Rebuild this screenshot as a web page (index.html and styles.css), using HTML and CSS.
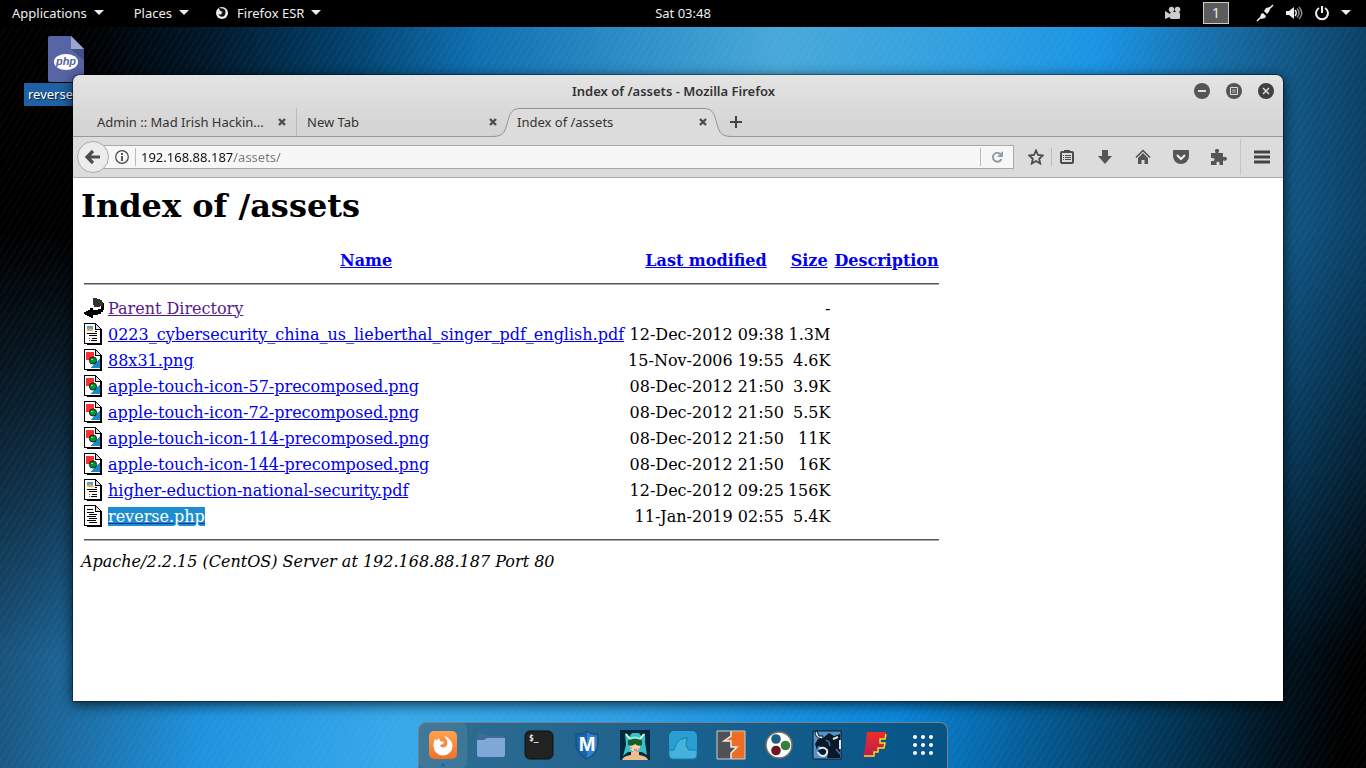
FILE: index.html
```html
<!DOCTYPE html>
<html lang="en">
<head>
<meta charset="utf-8">
<title>Index of /assets - Mozilla Firefox</title>
<link rel="stylesheet" href="styles.css">
</head>
<body>
<svg class="symbols" aria-hidden="true">
  <symbol id="page" viewBox="0 0 20 22"><path d="M1 1h11l5 5v14H1z" fill="#fff"/><path d="M0 0h12v1h1v1h1v1h1v1h1v1h1v1h1v16H3v-1H0zM1 1v19h15V7h-5V1z" fill="#000" fill-rule="evenodd"/><path d="M12 2v4h4V5h-1V4h-1V3h-1V2z" fill="#ddd"/></symbol>
  <symbol id="file-layout" viewBox="0 0 20 22"><use href="#page"/><path d="M3 3h6v5H3z" fill="#f9b04b"/><path d="M3 3h6v3H7v1H5V6H3z" fill="#4ba6d5"/><path d="M5 5h2v1h1v2H4V7h1z" fill="#f9a43f"/><path d="M11 8h2v1h-2zM3 10h10v1H3zM5 12h8v1H5zM8 15h5v1H8zM7 17h6v1H7z" fill="#000"/><path d="M5 15h1v1H5zM5 17h1v1H5z" fill="#e22"/></symbol>
  <symbol id="file-image" viewBox="0 0 20 22"><use href="#page"/><path d="M2 3h8v8H2z" fill="#fd3034"/><path d="M16 9v10H7z" fill="#168bc9"/><circle cx="9" cy="11.500" r="3.600" fill="#04933b" stroke="#000" stroke-width=".8" shape-rendering="auto"/><path d="M7 10h2v1H7z" fill="#7de28c"/></symbol>
  <symbol id="file-text" viewBox="0 0 20 22"><use href="#page"/><path d="M3 4h6v1H3zM3 7h7v1H3zM5 9h8v1H5zM3 11h9v1H3zM5 13h8v1H5zM3 15h9v1H3zM5 17h8v1H5z" fill="#000"/></symbol>
  <symbol id="file-back" viewBox="0 0 20 22"><path d="M9 1h4v1h3v1h2v2h1v4h-3v1h-6V8h-1z" fill="#333"/><path d="M19 6h1v7h-1v2h-2v2h-3v1h-5v3H7v-1H5v-1H3v-1H1v-1H0v-2h2v-1h2v-1h2v-2h3v2h5v-1h3V9h2z"/></symbol>
  <symbol id="close" viewBox="0 0 8 8"><path d="M1 1l6 6M7 1L1 7" stroke="#4d4d4d" stroke-width="2.400"/></symbol>
  <symbol id="caret" viewBox="0 0 10 6"><path d="M0 0h10L5 5z" fill="#eee"/></symbol>
</svg>

<header class="topbar">
  <nav class="menus">
    <button class="menu">Applications <svg class="caret"><use href="#caret"/></svg></button>
    <button class="menu">Places <svg class="caret"><use href="#caret"/></svg></button>
    <button class="menu fox-menu"><svg class="fox" viewBox="0 0 14 14"><circle cx="6" cy="7" r="6" fill="#eee"/><path d="M3 2c3 .5 5 0 6 2 1 2 .5 6-2 6.500C5 11 3 10 2.500 8L4 8.500 6.500 8 5 7l2-1-2-.8L3.500 4z" fill="#111"/></svg>Firefox ESR <svg class="caret"><use href="#caret"/></svg></button>
  </nav>
  <time class="clock">Sat 03:48</time>
  <div class="status">
    <button class="tray" aria-label="Recorder"><svg width="18" height="14" viewBox="0 0 18 14"><g fill="#ccc"><circle cx="7.500" cy="3.500" r="2.700"/><circle cx="13.500" cy="3.500" r="2.800"/><rect x="6" y="6" width="10" height="7" rx="1.500"/><path d="M1 5l5 3v3l-5 2z"/></g></svg></button>
    <button class="workspace">1</button>
    <button class="tray" aria-label="Network"><svg width="18" height="18" viewBox="0 0 18 18"><path d="M1 17L6 12M12 6l5-5" stroke="#eee" stroke-width="1.500"/><path d="M4 14l1-4 2-1 3 3-1 2-4 1zM8 7l2-3 4-1-.5 4L11 10z" fill="#eee"/></svg></button>
    <button class="tray" aria-label="Volume"><svg width="18" height="16" viewBox="0 0 18 16" fill="none"><path d="M1 6h3l5-4v12l-5-4H1z" fill="#eee"/><path d="M10 5q2.500 3 0 6" stroke="#eee" stroke-width="1.500"/><path d="M12 3.500q4 4.500 0 9M14 2q5.500 6 0 12" stroke="#888" stroke-width="1.500"/></svg></button>
    <button class="tray" aria-label="Power"><svg width="16" height="16" viewBox="0 0 16 16"><path d="M5 3a6 6 0 1 0 6 0M8 1v7" fill="none" stroke="#eee" stroke-width="2"/></svg></button>
    <button class="tray" aria-label="System menu"><svg class="caret"><use href="#caret"/></svg></button>
  </div>
</header>

<main class="desktop">
  <div class="shortcut">
    <svg width="36" height="46" viewBox="0 0 36 46"><path d="M2 0h21l13 13v33H2a2 2 0 0 1-2-2V2a2 2 0 0 1 2-2z" fill="#5765a4"/><path d="M23 13h13v12z" fill="#434f86"/><path d="M23 0l13 13H23z" fill="#9ca5cf"/><ellipse cx="18" cy="26" rx="12" ry="8" fill="#fff"/><text x="18" y="29" text-anchor="middle" class="php">php</text></svg>
    <span class="shortcut-name">reverse.php</span>
  </div>

  <section class="window">
    <div class="titlebar">
      <h2 class="title">Index of /assets - Mozilla Firefox</h2>
      <div class="controls">
        <button aria-label="Minimize"><svg width="16" height="16"><circle cx="8" cy="8" r="8" fill="#555"/><path d="M4 8h8" stroke="#ddd" stroke-width="2"/></svg></button>
        <button aria-label="Maximize"><svg width="16" height="16"><circle cx="8" cy="8" r="8" fill="#555"/><path d="M4.500 4.500h7v7h-7z" fill="#555" stroke="#ddd"/><path d="M6 6h4v4H6z" fill="#888" shape-rendering="crispEdges"/></svg></button>
        <button aria-label="Close"><svg width="16" height="16"><circle cx="8" cy="8" r="8" fill="#404040"/><path d="M5 5l6 6M11 5l-6 6" stroke="#ddd" stroke-width="1.500"/></svg></button>
      </div>
    </div>
    <div class="tabs">
      <div class="tab divided"><span class="tab-name">Admin :: Mad Irish Hackin...</span><button aria-label="Close tab"><svg class="x"><use href="#close"/></svg></button></div>
      <div class="tab"><span class="tab-name">New Tab</span><button aria-label="Close tab"><svg class="x"><use href="#close"/></svg></button></div>
      <div class="tab active">
        <svg class="tab-shape" viewBox="0 0 240 30" preserveAspectRatio="none"><path d="M0 28.500c13 0 13-6 16-16C18 5 20 .5 28 .5h184c8 0 10 4.500 12 12 3 10 3 16 16 16V30H0z" fill="#dcdcdc"/><path d="M0 28.500c13 0 13-6 16-16C18 5 20 .5 28 .5h184c8 0 10 4.500 12 12 3 10 3 16 16 16" fill="none" stroke="#8e959b"/></svg>
        <span class="tab-name">Index of /assets</span><button aria-label="Close tab"><svg class="x"><use href="#close"/></svg></button></div>
      <button class="new-tab" aria-label="New tab"><svg width="12" height="12"><path d="M6 0v12M0 6h12" stroke="#444" stroke-width="2"/></svg></button>
    </div>
    <div class="toolbar">
      <button class="back" aria-label="Back"><svg width="16" height="16" viewBox="0 0 16 16"><path d="M8 2L2 8l6 6M3 8h12" fill="none" stroke="#4c4c4c" stroke-width="3.200"/></svg></button>
      <div class="urlbar">
        <svg width="14" height="14" viewBox="0 0 14 14"><circle cx="7" cy="7" r="6.300" fill="none" stroke="#444" stroke-width="1.200"/><path d="M7 3v2M7 6v5" stroke="#444" stroke-width="1.800"/></svg>
        <input class="url" type="text" aria-label="Address" value="192.168.88.187/assets/">
        <button class="reload" aria-label="Reload"><svg width="14" height="14" viewBox="0 0 14 14"><path d="M11 4.500A4.500 4.500 0 1 0 11.500 9" fill="none" stroke="#929dab" stroke-width="2"/><path d="M13 1v6H7z" fill="#929dab"/></svg></button>
      </div>
      <button class="star" aria-label="Bookmark"><svg width="16" height="16" viewBox="0 0 16 16"><path d="M8 1.500l2 4.500 4.700.5-3.500 3.300 1 4.700L8 12l-4.200 2.500 1-4.700L1.300 6.500 6 6z" fill="none" stroke="#4a4a4a" stroke-width="1.800"/></svg></button>
      <div class="tools">
        <button class="tool" aria-label="Bookmarks list"><svg width="16" height="16" viewBox="0 0 16 16"><path d="M5 3V1h6v2" fill="#4c4c4c"/><rect x="2" y="3" width="12" height="11" rx="1" fill="none" stroke="#4c4c4c" stroke-width="2"/><path d="M4 6.500h1M4 8.500h1M4 10.500h1M6 6.500h6M6 8.500h6M6 10.500h6" stroke="#4c4c4c"/></svg></button>
        <button class="tool" aria-label="Downloads"><svg width="16" height="16" viewBox="0 0 16 16"><path d="M5 1h6v6h4l-7 8-7-8h4z" fill="#555"/></svg></button>
        <button class="tool" aria-label="Home"><svg width="16" height="16" viewBox="0 0 16 16"><path d="M1 8.500l7-7 7 7" fill="none" stroke="#4c4c4c" stroke-width="1.500"/><path d="M3 9l5-5 5 5v6H9.500v-4h-3v4H3z" fill="#555"/></svg></button>
        <button class="tool" aria-label="Pocket"><svg width="16" height="16" viewBox="0 0 16 16"><path d="M1 1h14q1 0 1 1v5a8 8 0 0 1-16 0V2q0-1 1-1z" fill="#555"/><path d="M4 6l4 4 4-4" fill="none" stroke="#eee" stroke-width="2"/></svg></button>
        <button class="tool" aria-label="Add-ons"><svg width="16" height="16" viewBox="0 0 16 16"><path d="M0 4h4.500V3a2 2 0 1 1 3 0v1H12v4h1a2 2 0 1 1 0 3.500h-1V16H8.500v-2a1.500 1.500 0 0 0-3 0v2H0v-4h2a1.500 1.500 0 0 0 0-3H0z" fill="#555"/></svg></button>
      </div>
      <button class="hamburger" aria-label="Menu"><svg width="16" height="14"><path d="M0 2h16M0 7h16M0 12h16" stroke="#444" stroke-width="3"/></svg></button>
    </div>
    <article class="page">
      <h1>Index of /assets</h1>
      <table>
        <tr><th><span class="icon"></span></th><th><a href="#name">Name</a></th><th><a href="#modified">Last modified</a></th><th><a href="#size">Size</a></th><th><a href="#description">Description</a></th></tr>
        <tr><th colspan="5"><hr></th></tr>
        <tr><td><svg class="icon"><use href="#file-back"/></svg></td><td><a class="visited" href="#parent">Parent Directory</a></td><td></td><td class="num">-</td><td></td></tr>
        <tr><td><svg class="icon"><use href="#file-layout"/></svg></td><td><a href="#f1">0223_cybersecurity_china_us_lieberthal_singer_pdf_english.pdf</a></td><td class="num">12-Dec-2012 09:38</td><td class="num">1.3M</td><td></td></tr>
        <tr><td><svg class="icon"><use href="#file-image"/></svg></td><td><a href="#f2">88x31.png</a></td><td class="num">15-Nov-2006 19:55</td><td class="num">4.6K</td><td></td></tr>
        <tr><td><svg class="icon"><use href="#file-image"/></svg></td><td><a href="#f3">apple-touch-icon-57-precomposed.png</a></td><td class="num">08-Dec-2012 21:50</td><td class="num">3.9K</td><td></td></tr>
        <tr><td><svg class="icon"><use href="#file-image"/></svg></td><td><a href="#f4">apple-touch-icon-72-precomposed.png</a></td><td class="num">08-Dec-2012 21:50</td><td class="num">5.5K</td><td></td></tr>
        <tr><td><svg class="icon"><use href="#file-image"/></svg></td><td><a href="#f5">apple-touch-icon-114-precomposed.png</a></td><td class="num">08-Dec-2012 21:50</td><td class="num">11K</td><td></td></tr>
        <tr><td><svg class="icon"><use href="#file-image"/></svg></td><td><a href="#f6">apple-touch-icon-144-precomposed.png</a></td><td class="num">08-Dec-2012 21:50</td><td class="num">16K</td><td></td></tr>
        <tr><td><svg class="icon"><use href="#file-layout"/></svg></td><td><a href="#f7">higher-eduction-national-security.pdf</a></td><td class="num">12-Dec-2012 09:25</td><td class="num">156K</td><td></td></tr>
        <tr><td><svg class="icon"><use href="#file-text"/></svg></td><td><a class="selected" href="#f8">reverse.php</a></td><td class="num">11-Jan-2019 02:55</td><td class="num">5.4K</td><td></td></tr>
        <tr><th colspan="5"><hr></th></tr>
      </table>
      <address>Apache/2.2.15 (CentOS) Server at 192.168.88.187 Port 80</address>
    </article>
  </section>

  <nav class="dock">
    <button class="app running current" aria-label="Firefox"><svg viewBox="0 0 30 30"><defs><linearGradient id="og" x2="0" y2="1"><stop stop-color="#ffa34e"/><stop offset="1" stop-color="#f0702a"/></linearGradient></defs><rect x="1" y="1" width="28" height="28" rx="5" fill="url(#og)"/><path d="M7 9l1.500 1.500L11 8l1 3 4 1-1 2-3 1 1 2c3 1 5 0 6-2 1-3 0-6-3-9 6 2 8.500 6 8.500 10a9.500 9.500 0 0 1-19 0c0-3 .5-5 1.500-7z" fill="#fff"/></svg></button>
    <button class="app running" aria-label="Files"><svg viewBox="0 0 30 30"><path d="M2 4h7l3 2h16v6H2z" fill="#416b94"/><path d="M1 10h7l3-2h18v17q0 2-2 2H3q-2 0-2-2z" fill="#7fa8d8"/></svg></button>
    <button class="app running" aria-label="Terminal"><svg viewBox="0 0 30 30"><rect x="1" y="1" width="28" height="28" rx="5" fill="#222" stroke="#111"/><text x="5" y="11" class="prompt">$_</text></svg></button>
    <button class="app" aria-label="Metasploit"><svg viewBox="0 0 30 30"><path d="M15 1q5 4 11 3v10c0 7-5 12-11 15C9 26 4 21 4 14V4q6 1 11-3z" fill="#1b61a9" stroke="#174777"/><path d="M15 2q5 4 10 3v9c0 6-4 11-10 14z" fill="#2e82cc"/><text x="15" y="21" text-anchor="middle" class="shield-letter">M</text></svg></button>
    <button class="app" aria-label="Armitage"><svg viewBox="0 0 30 30"><path d="M0 0h30v30H0z" fill="#04293f"/><path d="M5 3l4 4 3-4h7l3 4 3-4v9l2 13-5-3H8l-5 4 3-11z" fill="#3ac0c4"/><path d="M2 30q1-4 9-5v-3h8v3q8 1 9 5z" fill="#f0bd8b"/><path d="M10 11h10v8q-5 6-10 0z" fill="#f5d5b0"/><path d="M8 10q7-3 14 0v5q-4 2-7-1-3 3-7 1z" fill="#165e2b"/><path d="M6 4l4 5M24 4l-4 5" stroke="#dff4de" stroke-width="2"/><path d="M10 9q5-3 10 0" fill="none" stroke="#8bf2ee" stroke-width="2"/><path d="M10 18h2M18 19h2" stroke="#d359bd"/><path d="M14 20h3" stroke="#d23"/></svg></button>
    <button class="app" aria-label="Wireshark"><svg viewBox="0 0 30 30"><rect x="1" y="1" width="28" height="28" rx="5" fill="#299ed2"/><path d="M1 20h5c2-8 5-12 14-12-3 4-2 9 1 12h8v5q0 4-4 4H5q-4 0-4-4z" fill="#45b2dd" stroke="#157dac"/></svg></button>
    <button class="app" aria-label="Burp Suite"><svg viewBox="0 0 30 30"><path d="M1 1h28v28H1z" fill="#eb6e24"/><path d="M1 1h14v5l-7 5h7v6h6l-6 6v6H1z" fill="#505154"/><path d="M15 1v5l-7 5h7v6h6l-6 6v6" fill="none" stroke="#eee" stroke-width="1.500"/><path d="M1 1h28v28H1z" fill="none" stroke="#c8d0d6"/></svg></button>
    <button class="app" aria-label="Maltego"><svg viewBox="0 0 30 30"><circle cx="15" cy="15" r="13" fill="#fff" stroke="#77706d" stroke-width="1.500"/><circle cx="12" cy="9" r="4.800" fill="#1d607e"/><circle cx="21.500" cy="15.500" r="4.800" fill="#34803e"/><circle cx="12" cy="20.500" r="4.800" fill="#6d1720"/></svg></button>
    <button class="app" aria-label="BeEF"><svg viewBox="0 0 30 30"><path d="M1 1h28v28H1z" fill="#5592c9" stroke="#101827"/><path d="M11 8l6-5 5 3 6-2v24H15l1-5-3-5-7-2-1 4-2-6 3-5z" fill="#0a1829"/><path d="M3 2q0 6 7 7 1-1 1-3L7 6 5 1z" fill="#dce7ee" stroke="#0a1829"/><path d="M7 19q5-3 8 1 1 4-3 6-5 0-6-4" fill="#0a1829" stroke="#dce7ee" stroke-width="2"/><path d="M21 9l5-2M28 10v9" stroke="#dce7ee" stroke-width="2"/><path d="M14 10l3 2 1 4M24 19l4 5" fill="none" stroke="#3976ab" stroke-width="1.500"/></svg></button>
    <button class="app" aria-label="Faraday"><svg viewBox="0 0 30 30"><defs><linearGradient id="rg" x2="0" y2="1"><stop stop-color="#ee2d27"/><stop offset="1" stop-color="#b51d57"/></linearGradient></defs><path d="M7 2h19l-1 7h-6v4h5l-1 6h-6v4h-4v4H3l2-9z" fill="url(#rg)"/><path d="M26 4l-1 5h-5v4h5l-1 5h-6v4h-4v4H4" fill="none" stroke="#ffd91e" stroke-width="1.500"/></svg></button>
    <button class="app" aria-label="Show applications"><svg viewBox="0 0 30 30" fill="#fff"><circle cx="7" cy="7" r="2"/><circle cx="15" cy="7" r="2"/><circle cx="23" cy="7" r="2"/><circle cx="7" cy="15" r="2"/><circle cx="15" cy="15" r="2"/><circle cx="23" cy="15" r="2"/><circle cx="7" cy="23" r="2"/><circle cx="15" cy="23" r="2"/><circle cx="23" cy="23" r="2"/></svg></button>
  </nav>
</main>
</body>
</html>
```
FILE: styles.css
```css
* { box-sizing: border-box; }
body {
  margin: 0;
  height: 100vh;
  display: flex;
  flex-direction: column;
  overflow: hidden;
  font: 13px/20px "Noto Sans", "Open Sans", sans-serif;
  background: #000;
}
button {
  display: inline-flex;
  align-items: center;
  justify-content: center;
  padding: 0;
  border: 0;
  background: none;
  color: inherit;
  font: inherit;
}
svg { display: block; flex: none; }
.symbols { position: absolute; width: 0; height: 0; }
.caret { width: 10px; height: 6px; }

/* Top panel */
.topbar {
  display: grid;
  grid-template-columns: 1fr auto 1fr;
  align-items: center;
  height: 27px;
  padding-bottom: 2px;
  flex: none;
  color: #eee;
  background: #000;
}
.menus { display: flex; gap: 30px; padding-left: 12px; }
.menu { gap: 7px; }
.fox-menu { margin-left: -3px; }
.fox { width: 14px; height: 14px; }
.clock { text-align: center; }
.status { display: flex; justify-content: flex-end; align-items: center; gap: 11px; padding-right: 15px; }
.workspace {
  width: 26px;
  height: 22px;
  margin: 0 16px 0 10px;
  border: 1px solid #ccc;
  background: #5c5c5c;
  font-size: 14px;
}

/* Desktop wallpaper */
.desktop {
  position: relative;
  flex: 1;
  background: linear-gradient(92deg, #000 6%, #01182a 15%, #02406c 25%, #0e6eae 34%, #3192ca 47%, #49a9d9 56%, #2f9fe0 70%, #1a94e4 79%, #176ca4 88%, #0a3d60 99%);
}
.desktop::before, .desktop::after { content: ""; position: absolute; inset: 0; }
.desktop::before {
  background: linear-gradient(100deg, #123c56 0, #1a557e 8%, #1f93df 22%, #38a9ea 35%, #2d9fe5 50%, #0a86da 68%, #055d97 77%, #023352 87%, #00111c 94%, #000 98%);
  mask-image: linear-gradient(to bottom, transparent 28%, #000 85%);
}
.desktop::after {
  background: repeating-linear-gradient(122deg, transparent 0 4px, rgba(255, 255, 255, .025) 4px 6px);
}
.shortcut {
  position: absolute;
  z-index: 1;
  left: 24px;
  top: 9px;
  width: 84px;
  display: flex;
  flex-direction: column;
  align-items: center;
  gap: 1px;
  color: #fff;
}
.shortcut-name { align-self: stretch; padding: 1px 4px 2px; background: #1f61a4; text-shadow: 1px 1px 1px #123; }
.php { font: italic bold 11px "Liberation Sans", sans-serif; fill: #5765a4; }

/* Browser window */
.window {
  position: absolute;
  z-index: 2;
  inset: 48px 83px 67px 73px;
  display: flex;
  flex-direction: column;
  border-radius: 7px 7px 0 0;
  background: linear-gradient(#e4e4e4, #d5d5d5 50px);
  box-shadow: 0 0 0 1px rgba(0, 0, 0, .35), 0 3px 14px rgba(0, 0, 0, .75);
  color: #333;
  overflow: hidden;
}
.titlebar {
  display: grid;
  grid-template-columns: 80px 1fr 80px;
  align-items: center;
  height: 33px;
  padding: 0 9px 2px 0;
}
.title { grid-column: 2; margin: 0; text-align: center; font-size: 13px; font-weight: 600; }
.controls { display: flex; gap: 16px; }
.tabs { display: flex; height: 29px; padding-left: 14px; border-bottom: 1px solid #999; }
.tab {
  position: relative;
  display: flex;
  align-items: center;
  justify-content: space-between;
  width: 210px;
  padding: 0 10px;
}
.divided { border-right: 1px solid #bbb; }
.tab-name { position: relative; white-space: nowrap; }
.tab button { position: relative; }
.tab-shape { position: absolute; left: -15px; top: 0; width: 240px; height: 30px; }
.x { width: 8px; height: 8px; }
.new-tab { width: 38px; position: relative; }
.toolbar {
  display: flex;
  align-items: center;
  height: 41px;
  padding-left: 4px;
  background: #dcdcdc;
  border-bottom: 1px solid #aaa;
}
.back {
  z-index: 1;
  width: 32px;
  height: 32px;
  border: 1px solid #aaa;
  border-radius: 50%;
  background: #ececec;
}
.urlbar {
  display: flex;
  align-items: center;
  flex: 1;
  height: 24px;
  margin-left: -8px;
  padding-left: 13px;
  border: 1px solid #aaa;
  background: #f7f7f7;
}
.url {
  flex: 1;
  min-width: 0;
  height: 18px;
  margin-left: 6px;
  padding: 0 0 0 5px;
  border: 0;
  border-left: 1px solid #bbb;
  outline: 0;
  color: transparent;
  font: inherit;
  background: linear-gradient(90deg, #111 98px, #777 98px);
  background-clip: text;
}
.reload { width: 33px; height: 18px; border-left: 1px solid #bbb; }
.star { width: 38px; height: 18px; padding-left: 7px; border-right: 1px solid #bbb; }
.tools { display: flex; margin: 0 2px 0 -4px; }
.tool { width: 38px; height: 32px; }
.hamburger { width: 43px; height: 36px; border-left: 1px solid #c4c4c4; }

/* Directory listing */
.page {
  flex: 1;
  padding: 9px 8px 8px;
  overflow: hidden;
  background: #fff;
  color: #000;
  font: 16px/19px "DejaVu Serif", serif;
}
h1 { margin: 0 0 21px; font-size: 32px; line-height: 38px; }
table { border-spacing: 2px; border-collapse: separate; }
th, td { padding: 1px; white-space: nowrap; vertical-align: middle; }
.num { text-align: right; }
.icon { display: block; width: 20px; height: 22px; shape-rendering: crispEdges; }
hr { height: 2px; margin: 8px 0; border: 0; border-top: 1px solid #555; background: #aaa; }
a { color: #00e; }
.visited { color: #551a8b; }
.selected { background: #1c8ed0; color: #fff; text-decoration-color: #1f2f99; }

/* Dock */
.dock {
  position: absolute;
  z-index: 3;
  bottom: 0;
  left: 50%;
  transform: translateX(-50%);
  display: flex;
  height: 46px;
  border: 1px solid #75808a;
  border-bottom: 0;
  border-radius: 8px 8px 0 0;
  background: linear-gradient(90deg, rgba(47, 103, 136, .9), rgba(5, 79, 127, .9));
}
.app { position: relative; width: 48px; padding-bottom: 2px; }
.app svg { width: 30px; height: 30px; }
.current { background: rgba(255, 255, 255, .08); border-radius: 5px; }
.running::after {
  content: "";
  position: absolute;
  bottom: 1px;
  width: 4px;
  height: 4px;
  border-radius: 50%;
  background: #2366b5;
}
.prompt { font: bold 8px "DejaVu Sans Mono", monospace; fill: #eee; }
.shield-letter { font: bold 20px "Liberation Sans", sans-serif; fill: #fff; }
```
